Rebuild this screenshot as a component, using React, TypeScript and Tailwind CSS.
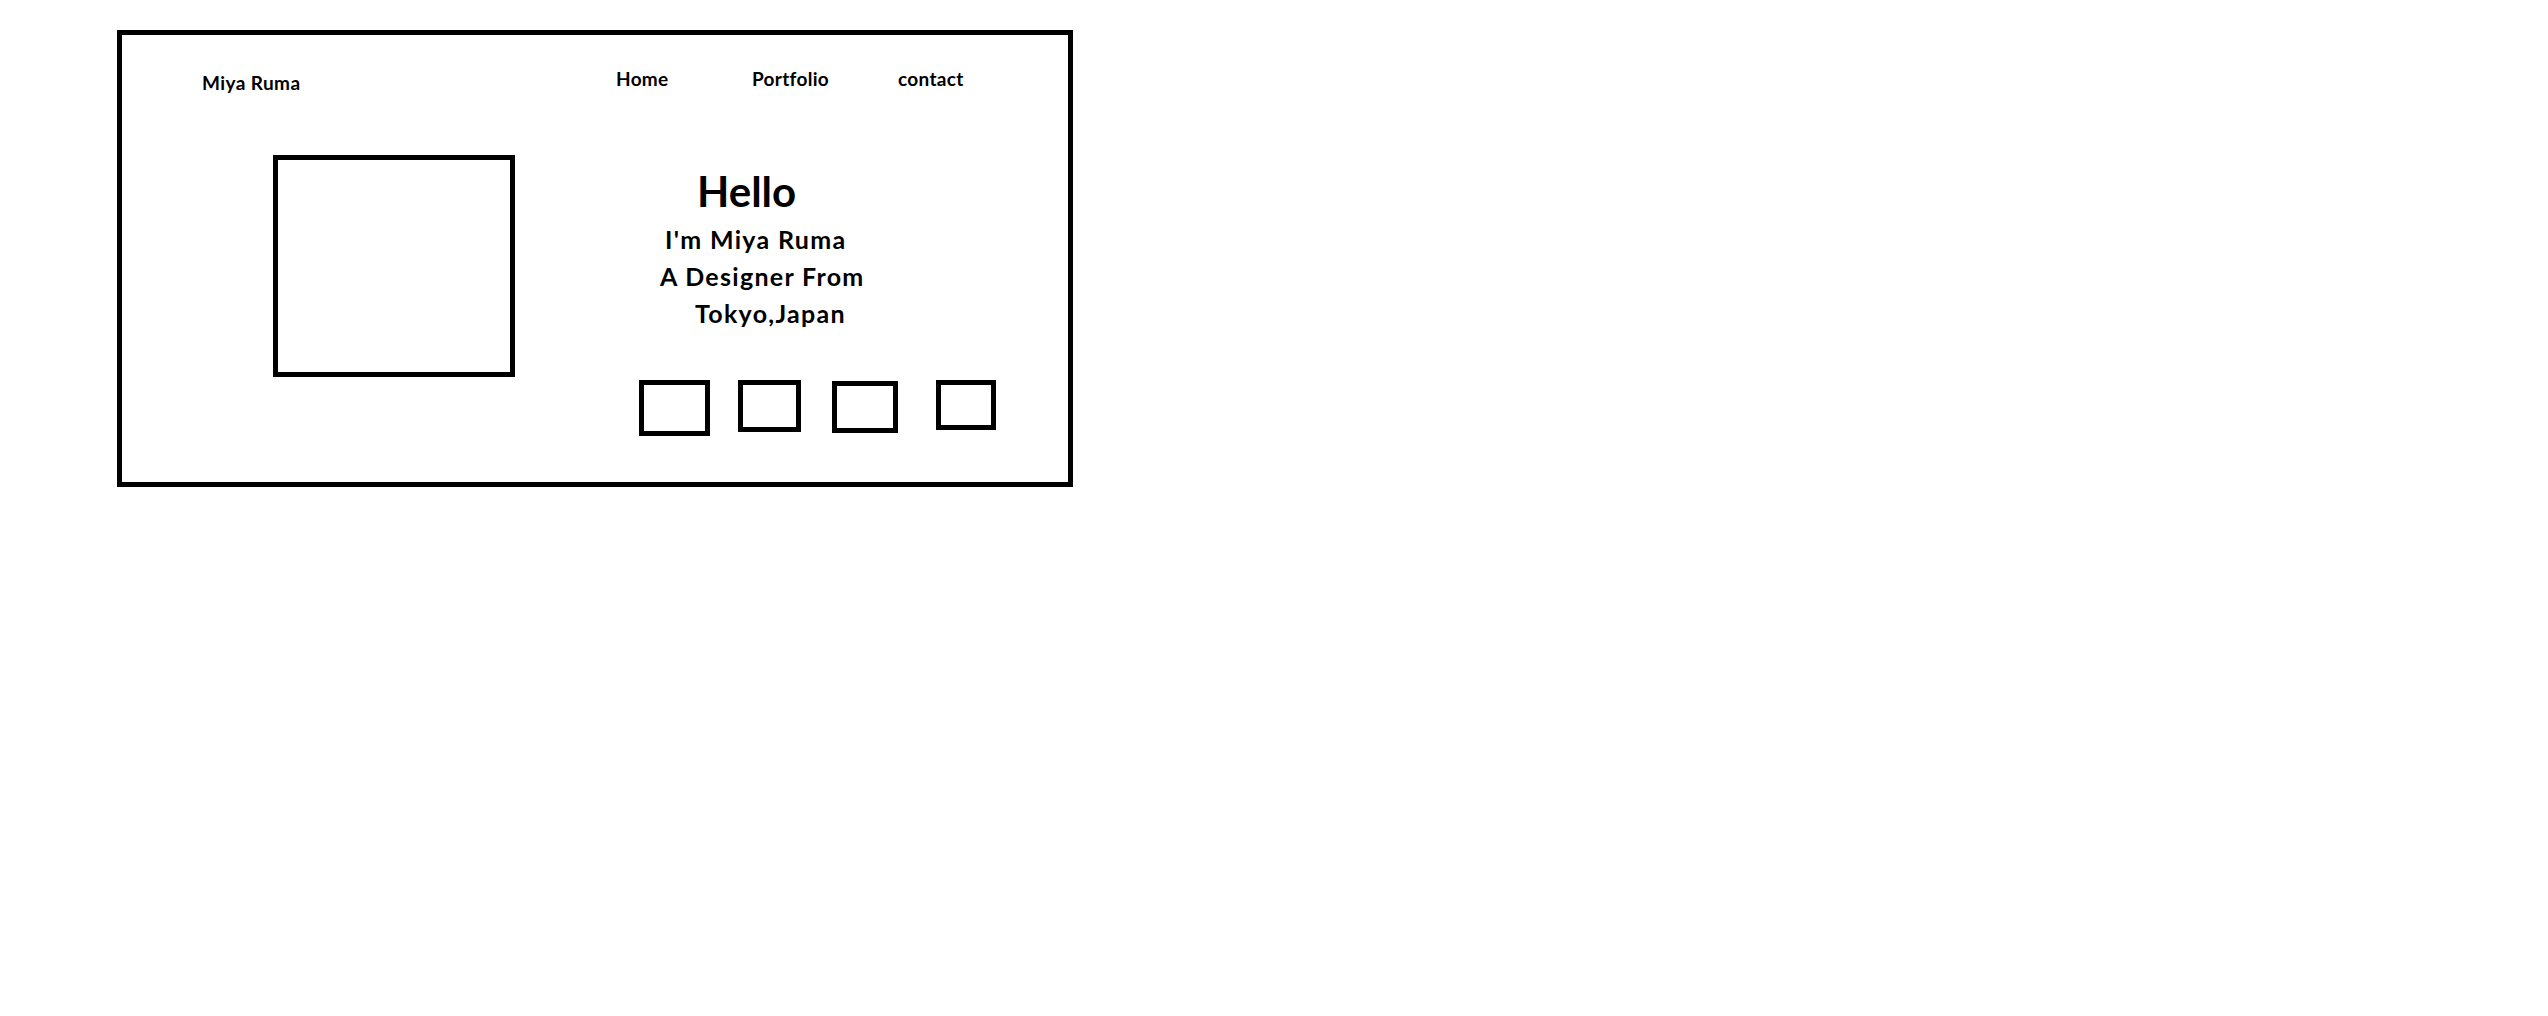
import React from 'react';

const navItems = [
  { label: 'Home', width: 'w-[136px]' },
  { label: 'Portfolio', width: 'w-[146px]' },
  { label: 'contact', width: '' },
];

// hand-drawn wireframe boxes under the intro text
const SocialBox: React.FC<{ className: string }> = ({ className }) => (
  <div className={`border-[5px] border-black shrink-0 ${className}`} />
);

export default function App() {
  return (
    <div className="min-h-screen bg-white pt-[30px] pl-[117px] text-black font-bold font-['Lato',sans-serif]">
      <div className="w-[956px] h-[457px] border-[5px] border-black">
        {/* top bar */}
        <div className="flex h-[60px]">
          <div className="ml-[80px] w-[414px] pt-[38px] text-[19px] tracking-[0.4px] leading-none">Miya Ruma</div>
          <nav className="flex pt-[34px] text-[19px] tracking-[0.3px] leading-none">
            {navItems.map((item) => (
              <a key={item.label} className={item.width}>
                {item.label}
              </a>
            ))}
          </nav>
        </div>

        {/* hero */}
        <div className="flex items-start pl-[151px]">
          <div className="w-[242px] h-[222px] mt-[60px] border-[5px] border-black shrink-0" />

          <div className="ml-[124px] mt-[75px] w-[357px]">
            <h1 className="ml-[58px] text-[42px] leading-none">Hello</h1>
            <div className="mt-[9px] text-[25px] tracking-[1.3px] leading-[37px]">
              <p className="ml-[26px]">I'm Miya Ruma</p>
              <p className="ml-[21px]">A Designer From</p>
              <p className="ml-[56px]">Tokyo,Japan</p>
            </div>

            <div className="flex items-start mt-[48px]">
              <SocialBox className="w-[71px] h-[56px]" />
              <SocialBox className="ml-[28px] w-[63px] h-[52px]" />
              <SocialBox className="ml-[31px] mt-[1px] w-[66px] h-[52px]" />
              <SocialBox className="ml-[38px] w-[60px] h-[50px]" />
            </div>
          </div>
        </div>
      </div>
    </div>
  );
}
